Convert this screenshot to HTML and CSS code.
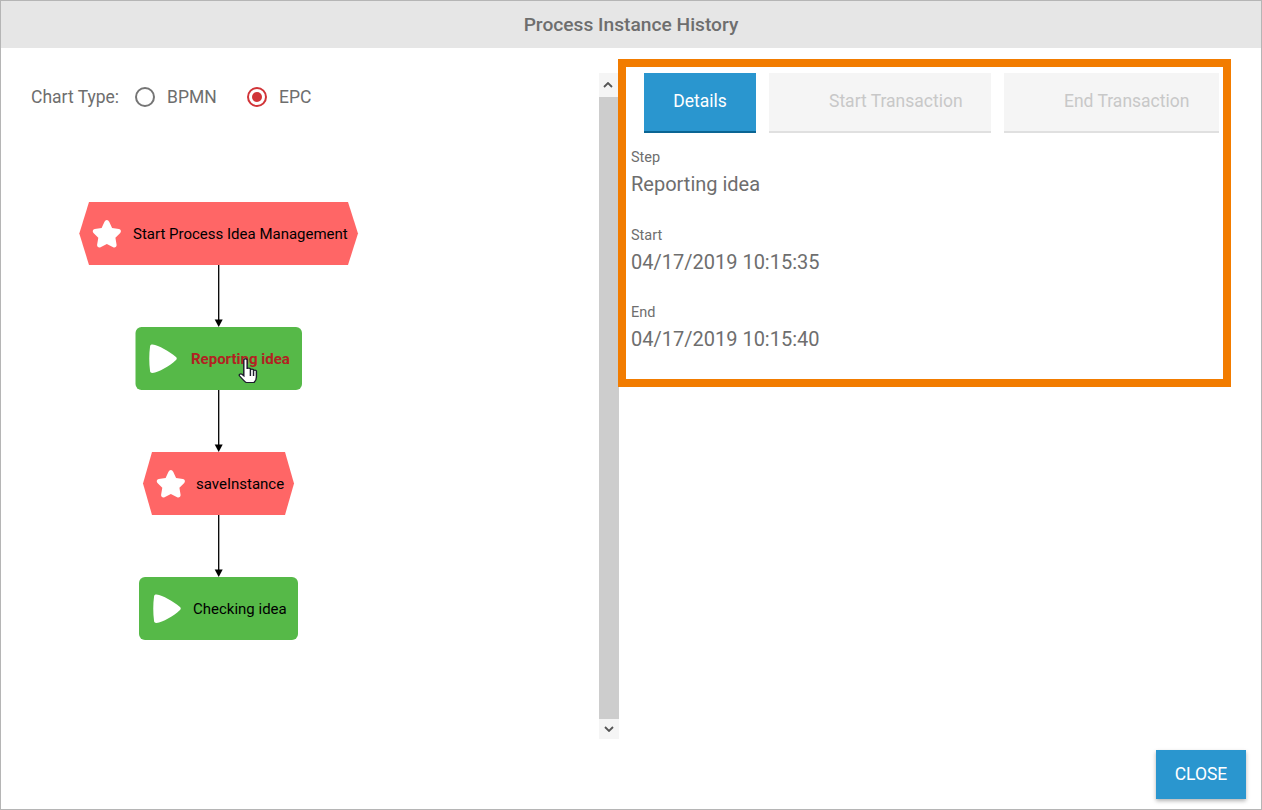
FILE: index.html
```html
<!DOCTYPE html>
<html lang="en">
<head>
<meta charset="utf-8">
<title>Process Instance History</title>
<link rel="stylesheet" href="styles.css">
</head>
<body>
<div class="dialog">
  <header class="title">Process Instance History</header>
  <main class="main">
    <section class="left">
      <div class="chart-type">
        <span class="chart-label">Chart Type:</span>
        <span class="radio"></span><span class="radio-text">BPMN</span>
        <span class="radio radio-on"></span><span class="radio-text">EPC</span>
      </div>
      <svg class="diagram" width="598" height="530" viewBox="0 0 598 530">
        <g class="edge">
          <path d="M217.700 85V142"/><path d="M217.700 210V267"/><path d="M217.700 335V392"/>
        </g>
        <path class="head" d="M213.700 139.500h8l-4 7.500z"/>
        <path class="head" d="M213.700 264.500h8l-4 7.500z"/>
        <path class="head" d="M213.700 389.500h8l-4 7.500z"/>

        <polygon class="event" points="78.300,53.500 88,22 347,22 357,53.500 347,85 88,85"/>
        <path class="star" transform="translate(105.850 53.850) scale(1.070) translate(-106 -51.500)" d="M106 38.500c1 0 1.700.8 2.200 1.800l2.700 5.700 6.400 1c1.800.3 2.500 2.300 1.200 3.600l-4.500 4.600 1.100 6.500c.3 1.800-1.600 3.200-3.200 2.300l-5.900-3.100-5.900 3.100c-1.600.9-3.500-.5-3.200-2.300l1.100-6.500-4.500-4.600c-1.300-1.300-.6-3.300 1.200-3.600l6.400-1 2.700-5.700c.5-1 1.200-1.800 2.200-1.800z"/>
        <text class="node-text" x="132" y="58.500">Start Process Idea Management</text>

        <rect class="func" x="134.500" y="147" width="166.500" height="63" rx="6"/>
        <path class="star" d="M151.500 164.500C158 165.500 168 171 175 177C176 178 176 179 175 180C168 186.500 158 192 151.500 193C149.500 193 149 192 149 190.500C148 183 148 174 149 167C149 165 150 164.500 151.500 164.500z"/>
        <text class="node-text node-active" x="190" y="184">Reporting idea</text>

        <polygon class="event" points="142,303.500 151,272 284,272 293,303.500 284,335 151,335"/>
        <path class="star" transform="translate(169.850 303.850) scale(1.070) translate(-170 -301.500)" d="M170 288.500c1 0 1.700.8 2.200 1.800l2.700 5.700 6.400 1c1.800.3 2.500 2.300 1.200 3.600l-4.500 4.600 1.100 6.500c.3 1.800-1.600 3.200-3.200 2.300l-5.900-3.100-5.900 3.100c-1.600.9-3.500-.5-3.200-2.300l1.100-6.500-4.500-4.600c-1.300-1.300-.6-3.300 1.200-3.600l6.400-1 2.700-5.700c.5-1 1.200-1.800 2.200-1.800z"/>
        <text class="node-text" x="195" y="308.500">saveInstance</text>

        <rect class="func" x="138" y="397" width="159" height="63" rx="6"/>
        <path class="star" transform="translate(4 250)" d="M151.500 164.500C158 165.500 168 171 175 177C176 178 176 179 175 180C168 186.500 158 192 151.500 193C149.500 193 149 192 149 190.500C148 183 148 174 149 167C149 165 150 164.500 151.500 164.500z"/>
        <text class="node-text" x="192" y="434">Checking idea</text>

        <g transform="translate(247 0) scale(1.200 1) translate(-247 0)">
          <path class="cursor" d="M243.500 180c0-1.500 2.800-1.500 2.800 0v9c0-1.300 2.700-1.300 2.700 0v1c0-1.300 2.600-1.300 2.600 0v1c0-1.200 2.400-1.200 2.400 0v6c0 2.500-1 4.500-2 5.500h-6.500c-1.500-1-4-4.500-5.500-6.500-1-1.500.8-2.800 2-1.700l1.500 1.500z"/>
          <path class="cursor" d="M249 190v6M251.600 191v5"/>
        </g>
      </svg>
    </section>
    <div class="scrollbar">
      <div class="scroll-btn scroll-btn-up"><svg width="10" height="6" viewBox="0 0 10 6"><path class="chev" d="M1 5l4-4 4 4"/></svg></div>
      <div class="scroll-thumb"></div>
      <div class="scroll-btn"><svg width="10" height="6" viewBox="0 0 10 6"><path class="chev" d="M1 1l4 4 4-4"/></svg></div>
    </div>
    <section class="right">
      <div class="highlight">
        <div class="tabs">
          <div class="tab tab-active">Details</div>
          <div class="tab tab-start">Start Transaction</div>
          <div class="tab tab-end">End Transaction</div>
        </div>
        <div class="field"><div class="field-label">Step</div><div class="field-value">Reporting idea</div></div>
        <div class="field"><div class="field-label">Start</div><div class="field-value">04/17/2019 10:15:35</div></div>
        <div class="field"><div class="field-label">End</div><div class="field-value">04/17/2019 10:15:40</div></div>
      </div>
    </section>
  </main>
  <footer class="footer"><button class="close">CLOSE</button></footer>
</div>
</body>
</html>
```
FILE: styles.css
```css
* { box-sizing: border-box; }
html, body { margin: 0; padding: 0; }
body { width: 1262px; height: 810px; overflow: hidden; background: #fff; font-family: Roboto, "Liberation Sans", sans-serif; color: #6e6e6e; }
.dialog { width: 1262px; height: 810px; border: 1px solid #b5b5b5; display: flex; flex-direction: column; }
.title { height: 47px; flex: none; background: #e6e6e6; display: flex; align-items: center; justify-content: center; font-size: 19.200px; font-weight: 500; color: #6e6e6e; }
.main { flex: 1; display: flex; min-height: 0; }
.left { width: 598px; flex: none; }
.chart-type { display: flex; align-items: center; height: 20px; margin: 39px 0 0 30px; font-size: 17.500px; color: #6e6e6e; }
.chart-label { width: 104px; }
.radio { width: 20px; height: 20px; border: 2px solid #757575; border-radius: 50%; flex: none; position: relative; }
.radio-on { border-color: #d13438; }
.radio-on::after { content: ""; position: absolute; left: 3px; top: 3px; width: 10px; height: 10px; border-radius: 50%; background: #d13438; }
.radio-text { margin-left: 12px; width: 80px; }
.diagram { display: block; margin-top: 73px; }
.edge path { stroke: #000; stroke-width: 1.300; fill: none; }
.head { fill: #000; }
.event { fill: #ff6666; }
.func { fill: #56b948; }
.star { fill: #fff; }
.node-text { font-family: Roboto, sans-serif; font-size: 15px; fill: #000; }
.node-active { fill: #b22222; font-weight: 700; }
.cursor { fill: #fff; stroke: #1c1c2c; stroke-width: 1.200; }
.scrollbar { width: 20px; flex: none; height: 666px; margin-top: 25px; display: flex; flex-direction: column; background: #f5f5f5; }
.scroll-btn { height: 20px; flex: none; display: flex; align-items: center; justify-content: center; background: #f5f5f5; }
.scroll-btn-up { height: 24px; justify-content: flex-start; padding-left: 4px; }
.scroll-thumb { flex: 1; background: #cdcdcd; }
.chev { fill: none; stroke: #555; stroke-width: 1.800; }
.right { flex: 1; min-width: 0; }
.highlight { width: 613px; height: 328px; margin: 11px 0 0 -1px; border: 8px solid #f27c00; padding: 6px 0 0 5px; background: #fff; position: relative; }
.tabs { display: flex; gap: 13px; margin-left: 13px; }
.tab { height: 60px; display: flex; align-items: center; font-size: 17.500px; padding-bottom: 2px; background: #f5f5f5; color: #c8c8c8; border-bottom: 2px solid #e0e0e0; }
.tab-active { width: 112px; justify-content: center; background: #2a96cf; color: #fff; border-bottom-color: #0a6593; }
.tab-start { width: 222px; padding-left: 60px; }
.tab-end { width: 215px; padding-left: 60px; }
.field { height: 77.500px; }
.tabs + .field { margin-top: 14px; }
.field-label { font-size: 14.500px; line-height: 22px; color: #6e6e6e; }
.field-value { font-size: 20px; line-height: 30px; color: #6e6e6e; }
.footer { flex: none; display: flex; justify-content: flex-end; padding: 0 15px 10px 0; }
.close { width: 90px; height: 49px; border: 0; background: #2a96cf; color: #fff; font-family: Roboto, sans-serif; font-size: 17.500px; padding: 0 0 2px; box-shadow: 0 2px 4px rgba(0,0,0,.3); }
```
